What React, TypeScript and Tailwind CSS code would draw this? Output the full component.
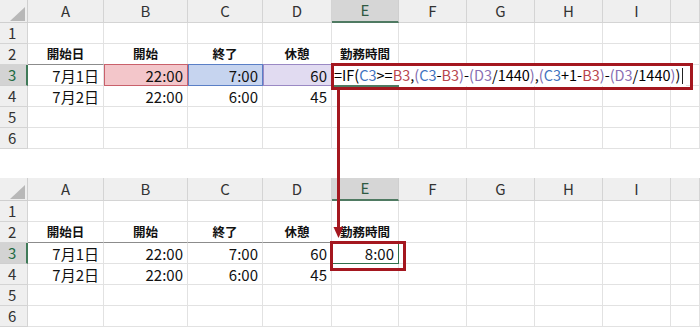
import React from "react";

type Cell = { text?: string; bold?: boolean; align?: "left" | "center" | "right"; cls?: string };

const COLS = ["A", "B", "C", "D", "E", "F", "G", "H", "I", ""];

const FONT = { fontFamily: '"Noto Sans CJK JP", "Noto Sans", sans-serif' };

function buildRows(editing: boolean): Cell[][] {
  const empty = (): Cell[] => COLS.map(() => ({}));
  const r1 = empty();
  const r2 = empty();
  ["開始日", "開始", "終了", "休憩", "勤務時間"].forEach((t, i) => {
    r2[i] = { text: t, bold: true, align: "center" };
  });
  const r3 = empty();
  r3[0] = { text: "7月1日", align: "right" };
  r3[1] = {
    text: "22:00",
    align: "right",
    cls: editing ? "bg-[#f3c6ca] outline outline-1 outline-[#c9606b] -outline-offset-1" : "",
  };
  r3[2] = {
    text: "7:00",
    align: "right",
    cls: editing ? "bg-[#c6d4ef] outline outline-1 outline-[#5a7fc6] -outline-offset-1" : "",
  };
  r3[3] = {
    text: "60",
    align: "right",
    cls: editing ? "bg-[#e1dbf1] outline outline-1 outline-[#9a89c4] -outline-offset-1" : "",
  };
  r3[4] = editing
    ? {}
    : { text: "8:00", align: "right", cls: "outline outline-1 outline-[#2f6f4b] -outline-offset-1" };
  const r4 = empty();
  r4[0] = { text: "7月2日", align: "right" };
  r4[1] = { text: "22:00", align: "right" };
  r4[2] = { text: "6:00", align: "right" };
  r4[3] = { text: "45", align: "right" };
  return [r1, r2, r3, r4, empty(), empty()];
}

// Excel-style formula with colour-coded references and nested parentheses
const PURPLE = "text-[#7d67ad]";
const BLUE = "text-[#3f73c0]";
const RED = "text-[#b9474f]";
const VIOLET = "text-[#8a6fb4]";
const FORMULA: [string, string][] = [
  ["=IF(", ""],
  ["C3", BLUE],
  [">=", ""],
  ["B3", RED],
  [",", ""],
  ["(", PURPLE],
  ["C3", BLUE],
  ["-", ""],
  ["B3", RED],
  [")", PURPLE],
  ["-", ""],
  ["(", PURPLE],
  ["D3", VIOLET],
  ["/1440", ""],
  [")", PURPLE],
  [",", ""],
  ["(", PURPLE],
  ["C3", BLUE],
  ["+1-", ""],
  ["B3", RED],
  [")", PURPLE],
  ["-", ""],
  ["(", PURPLE],
  ["D3", VIOLET],
  ["/1440", ""],
  [")", PURPLE],
  [")", ""],
];

function Sheet({ editing }: { editing: boolean }) {
  const rows = buildRows(editing);
  return (
    <div className="relative">
      <div className="grid grid-cols-[28px_76px_84px_75px_69px_67px_68px_68px_68px_68px_29px] grid-rows-[23px_repeat(6,21px)] text-[#111]">
        {/* corner */}
        <div className="relative bg-[#efefef] border-r border-b border-[#cfcfcf]">
          <svg className="absolute left-0 top-0" width="28" height="23" viewBox="0 0 28 23">
            <polygon points="10,21 25,21 25,7" fill="#b8b8b8" />
          </svg>
        </div>
        {COLS.map((c, i) => (
          <div
            key={"h" + i}
            className={
              i === 4
                ? "flex items-center justify-center bg-[#d6d6d6] border-r border-[#cfcfcf] border-b-2 border-b-[#4f7a62] text-[15px] text-[#2f5a42]"
                : "flex items-center justify-center bg-[#efefef] border-r border-b border-[#d4d4d4] text-[15px] text-[#333]"
            }
          >
            {c}
          </div>
        ))}
        {rows.map((row, ri) => (
          <React.Fragment key={"r" + ri}>
            <div
              className={
                ri === 2
                  ? "flex items-center pl-[8px] bg-[#d3d3d3] border-r-2 border-r-[#3f7a58] border-b border-[#cfcfcf] text-[15px] text-[#1f6b43]"
                  : "flex items-center pl-[8px] bg-[#efefef] border-r border-b border-[#d4d4d4] text-[15px] text-[#333]"
              }
            >
              {ri + 1}
            </div>
            {row.map((cell, ci) => (
              <div
                key={ci}
                className={[
                  "flex items-center border-r border-b border-[#e2e2e2] leading-none whitespace-nowrap",
                  ri === 2 && ci < 4 ? "border-t border-t-[#8c8c8c] -mt-px" : "",
                  cell.align === "center" ? "justify-center" : "justify-end pr-[4px]",
                  cell.bold ? "font-bold text-[12.5px]" : "text-[15px]",
                  cell.cls || "",
                ].join(" ")}
              >
                {cell.text}
              </div>
            ))}
          </React.Fragment>
        ))}
      </div>

      {editing && (
        <>
          <div className="absolute left-[332px] top-[65px] h-[21px] w-[354px] bg-white flex items-center pl-[2px] text-[14.5px] leading-none whitespace-nowrap">
            {FORMULA.map(([t, c], i) => (
              <span key={i} className={c}>
                {t}
              </span>
            ))}
            <span className="inline-block w-px h-[16px] bg-[#222] ml-[2px]" />
          </div>
          <div className="absolute left-[332px] top-[85px] h-[2px] w-[67px] bg-[#4f7a62]" />
        </>
      )}
    </div>
  );
}

export default function App() {
  return (
    <div className="relative w-[700px] h-[328px] overflow-hidden bg-white" style={FONT}>
      <Sheet editing />
      <div className="mt-[29px]">
        <Sheet editing={false} />
      </div>

      {/* callout boxes */}
      <div className="absolute left-[331px] top-[63px] w-[362px] h-[27px] border-[3px] border-[#a4171f]" />
      <div className="absolute left-[330px] top-[241px] w-[76px] h-[30px] border-[3px] border-[#a4171f]" />

      {/* connecting arrow */}
      <svg className="absolute left-0 top-0 pointer-events-none" width="700" height="328" viewBox="0 0 700 328">
        <line x1="338.5" y1="89" x2="338.5" y2="229" stroke="#a4171f" strokeWidth="3" />
        <polygon points="333.5,227 343.5,227 338.5,238" fill="#a4171f" />
      </svg>
    </div>
  );
}
